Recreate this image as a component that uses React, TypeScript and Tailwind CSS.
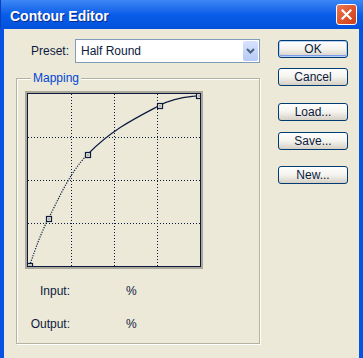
import React from "react";

const NAVY = "#0c1a40";

type P = [number, number];
const pts: P[] = [
  [1.5, 171.5],
  [20.5, 124.5],
  [59.5, 60.5],
  [131.5, 11.5],
  [171, 1.5],
];

function seg(i: number, t = 6): string {
  const p0 = pts[Math.max(0, i - 1)];
  const p1 = pts[i];
  const p2 = pts[i + 1];
  const p3 = pts[Math.min(pts.length - 1, i + 2)];
  const c1x = p1[0] + (p2[0] - p0[0]) / t;
  const c1y = p1[1] + (p2[1] - p0[1]) / t;
  const c2x = p2[0] - (p3[0] - p1[0]) / t;
  const c2y = p2[1] - (p3[1] - p1[1]) / t;
  return `C ${c1x} ${c1y} ${c2x} ${c2y} ${p2[0]} ${p2[1]}`;
}

const dottedPath = `M ${pts[0][0]} ${pts[0][1]} ${seg(0)} ${seg(1)}`;
const solidPath = `M ${pts[2][0]} ${pts[2][1]} ${seg(2, 4.5)} ${seg(3)}`;

function Graph() {
  const grid = [43, 86, 129];
  return (
    <div className="w-[178px] h-[178px] border-2 border-[#ACA899]">
      <div className="w-full h-full border border-[#0c1a40] bg-[#ECE9D8]">
        <svg width="172" height="172" viewBox="0 0 172 172" className="block">
          {grid.map((g) => (
            <line key={"v" + g} x1={g + 0.5} y1={0} x2={g + 0.5} y2={172} stroke={NAVY} strokeWidth={1} strokeDasharray="1 2" />
          ))}
          {grid.map((g) => (
            <line key={"h" + g} x1={0} y1={g + 0.5} x2={172} y2={g + 0.5} stroke={NAVY} strokeWidth={1} strokeDasharray="1 2" />
          ))}
          <path d={dottedPath} fill="none" stroke={NAVY} strokeWidth={1.2} strokeDasharray="1.2 1.3" />
          <path d={solidPath} fill="none" stroke={NAVY} strokeWidth={1.2} />
          {pts.map((p, i) => (
            <g key={i}>
              <rect x={Math.round(p[0]) - 2.5} y={Math.round(p[1]) - 2.5} width={5} height={5} fill="#ECE9D8" stroke={NAVY} strokeWidth={1.2} />
              <rect x={Math.round(p[0]) - 0.5} y={Math.round(p[1]) - 0.5} width={1} height={1} fill={NAVY} />
            </g>
          ))}
        </svg>
      </div>
    </div>
  );
}

function XPButton({ label, def, className }: { label: string; def?: boolean; className?: string }) {
  return (
    <div
      className={
        "w-[70px] h-[18px] rounded-[3px] border border-[#003C74] bg-gradient-to-b from-[#FFFFFF] via-[#F4F3EE] to-[#D6D0C5] flex items-center justify-center text-[12px] leading-none text-[#0c1a40] " +
        (def ? "shadow-[inset_0_0_0_1px_#B8CFF5,inset_0_-1px_0_1px_#7C9BE9] " : "shadow-[inset_0_-1px_0_#D6D0C5] ") +
        (className ?? "")
      }
    >
      {label}
    </div>
  );
}

export default function App() {
  return (
    <div
      className="w-[363px] h-[358px] overflow-hidden bg-[#0553E2] flex flex-col"
      style={{ fontFamily: '"Liberation Sans", Arial, sans-serif' }}
    >
      {/* Title bar */}
      <div className="h-[29px] shrink-0 bg-gradient-to-b from-[#3C86F5] via-[#0A5DE8] to-[#0251DC] flex items-center pl-[9px] pr-[6px] border-l border-[#0A3EC2]">
        <span
          className="text-white font-bold text-[14px] leading-none pt-[3px]"
          style={{ textShadow: "1px 1px 0 #0A2A8A" }}
        >
          Contour Editor
        </span>
        <div className="ml-auto w-[21px] h-[21px] rounded-[3px] border border-white bg-gradient-to-br from-[#E97A55] via-[#E0552E] to-[#C8401C] flex items-center justify-center">
          <svg width="11" height="11" viewBox="0 0 11 11">
            <path d="M1.5 1.5 L9.5 9.5 M9.5 1.5 L1.5 9.5" stroke="white" strokeWidth={2.2} strokeLinecap="square" />
          </svg>
        </div>
      </div>

      {/* Body */}
      <div className="flex-1 ml-[4px] mr-[4px] bg-[#ECE9D8] flex text-[#0c1a40] text-[12px]">
        {/* Left column */}
        <div className="pl-[12px] pt-[10px] w-[256px] flex flex-col">
          <div className="flex items-center h-[24px]">
            <span className="ml-[15px] w-[44px]">Preset:</span>
            <div className="w-[185px] h-[24px] border border-[#7F9DB9] bg-white flex items-center">
              <span className="pl-[5px] flex-1">Half Round</span>
              <div className="w-[15px] h-[20px] mr-[1px] rounded-[2px] bg-gradient-to-b from-[#D6E3FD] to-[#B7CAF5] flex items-center justify-center">
                <svg width="9" height="6" viewBox="0 0 9 6">
                  <path d="M1 1 L4.5 4.5 L8 1" fill="none" stroke="#4D6185" strokeWidth={2} />
                </svg>
              </div>
            </div>
          </div>

          {/* Group box */}
          <div className="relative mt-[15px] w-[244px] h-[266px] border border-[#B5B2A1] shadow-[1px_1px_0_#FFFFFF,inset_1px_1px_0_#FFFFFF] pl-[8px] pt-[12px]">
            <span className="absolute left-[14px] top-[-8px] px-[2px] bg-[#ECE9D8] text-[#0046D5] leading-[15px]">
              Mapping
            </span>
            <Graph />
            <div className="flex items-center h-[16px] mt-[14px]">
              <span className="w-[45px] text-right">Input:</span>
              <span className="ml-[56px]">%</span>
            </div>
            <div className="flex items-center h-[16px] mt-[17px]">
              <span className="w-[45px] text-right">Output:</span>
              <span className="ml-[56px]">%</span>
            </div>
          </div>
        </div>

        {/* Right column */}
        <div className="ml-[18px] pt-[11px] flex flex-col">
          <XPButton label="OK" def />
          <XPButton label="Cancel" className="mt-[10px]" />
          <XPButton label="Load..." className="mt-[17px]" />
          <XPButton label="Save..." className="mt-[11px]" />
          <XPButton label="New..." className="mt-[16px]" />
        </div>
      </div>
    </div>
  );
}
